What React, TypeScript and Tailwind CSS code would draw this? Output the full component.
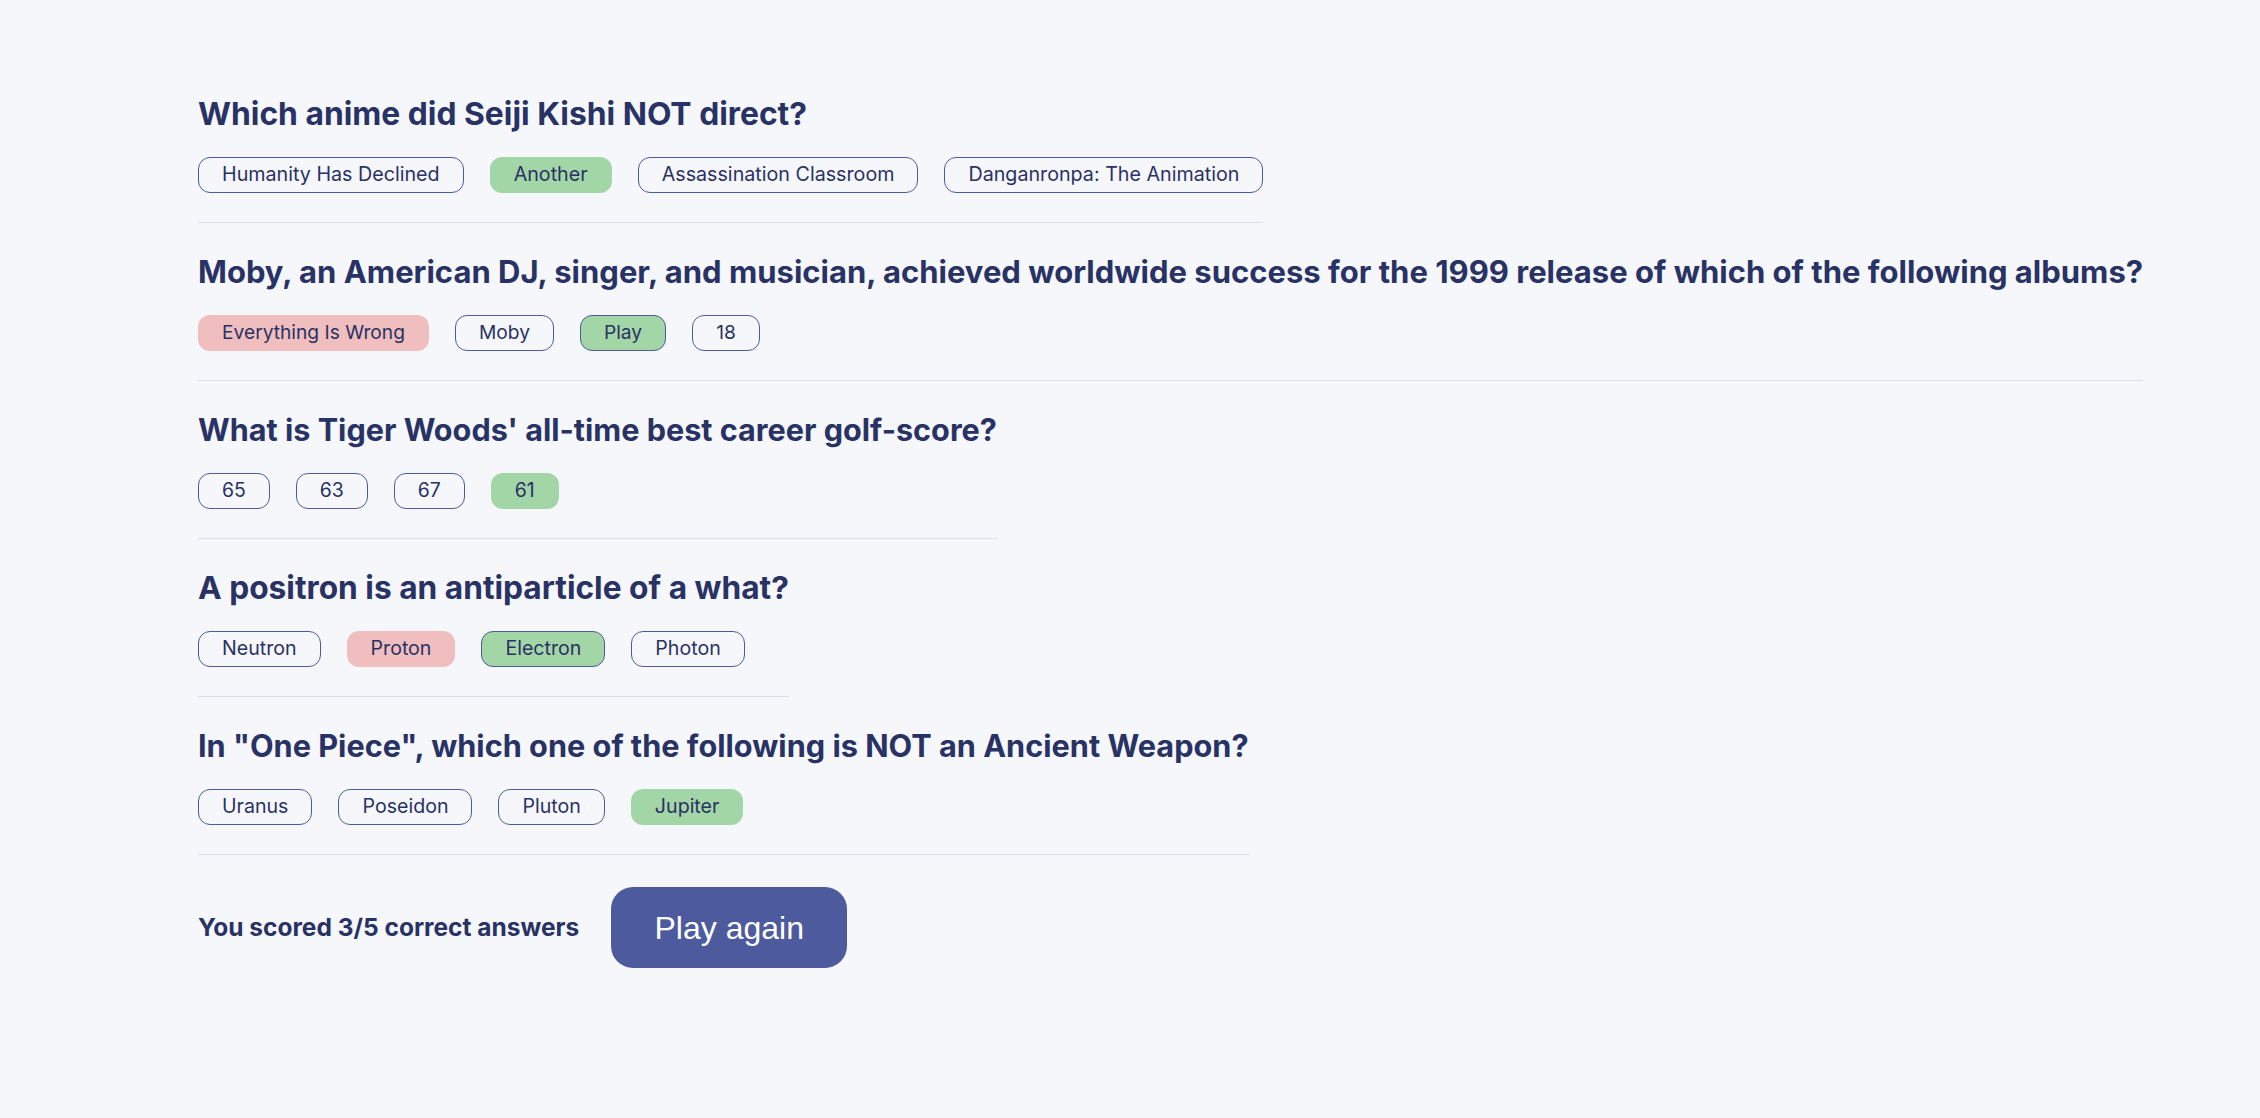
import React from "react";

type Status = "none" | "correct" | "wrong" | "missed";

const questions: { q: string; qSize: string; aSize: string; answers: { t: string; s: Status }[] }[] = [
  {
    q: "Which anime did Seiji Kishi NOT direct?",
    qSize: "text-[31.8px]",
    aSize: "text-[19.7px]",
    answers: [
      { t: "Humanity Has Declined", s: "none" },
      { t: "Another", s: "correct" },
      { t: "Assassination Classroom", s: "none" },
      { t: "Danganronpa: The Animation", s: "none" },
    ],
  },
  {
    q: "Moby, an American DJ, singer, and musician, achieved worldwide success for the 1999 release of which of the following albums?",
    qSize: "text-[31px]",
    aSize: "text-[19.2px]",
    answers: [
      { t: "Everything Is Wrong", s: "wrong" },
      { t: "Moby", s: "none" },
      { t: "Play", s: "missed" },
      { t: "18", s: "none" },
    ],
  },
  {
    q: "What is Tiger Woods' all-time best career golf-score?",
    qSize: "text-[30.6px]",
    aSize: "text-[19.4px]",
    answers: [
      { t: "65", s: "none" },
      { t: "63", s: "none" },
      { t: "67", s: "none" },
      { t: "61", s: "correct" },
    ],
  },
  {
    q: "A positron is an antiparticle of a what?",
    qSize: "text-[31.7px]",
    aSize: "text-[19.6px]",
    answers: [
      { t: "Neutron", s: "none" },
      { t: "Proton", s: "wrong" },
      { t: "Electron", s: "missed" },
      { t: "Photon", s: "none" },
    ],
  },
  {
    q: 'In "One Piece", which one of the following is NOT an Ancient Weapon?',
    qSize: "text-[30.7px]",
    aSize: "text-[19.6px]",
    answers: [
      { t: "Uranus", s: "none" },
      { t: "Poseidon", s: "none" },
      { t: "Pluton", s: "none" },
      { t: "Jupiter", s: "correct" },
    ],
  },
];

const statusClass: Record<Status, string> = {
  none: "border-[#4d5b9e] bg-transparent",
  correct: "border-transparent bg-[#a3d6a7]",
  wrong: "border-transparent bg-[#f0bebe]",
  missed: "border-[#4d5b9e] bg-[#a3d6a7]",
};

export default function App() {
  return (
    <div
      className="min-h-[1118px] w-full bg-[#f5f7fb] pl-[198px] pt-[65px] text-[#293264]"
      style={{ fontFamily: "Inter, 'Noto Sans', sans-serif" }}
    >
      {questions.map((item, i) => (
        <div key={i} className="flex w-fit flex-col border-b border-[#dbdef0] pt-[29px] pb-[29px]">
          <h2 className={`h-[40px] whitespace-nowrap font-bold leading-[40px] ${item.qSize}`}>{item.q}</h2>
          <div className="mt-[23px] flex gap-[26px]">
            {item.answers.map((a, j) => (
              <div
                key={j}
                className={`flex h-[36px] items-center whitespace-nowrap rounded-[12px] border px-[23px] leading-none ${item.aSize} ${statusClass[a.s]}`}
              >
                {a.t}
              </div>
            ))}
          </div>
        </div>
      ))}
      <div className="mt-[32px] flex h-[81px] items-center gap-[32px]">
        <span className="text-[24.5px] font-bold">You scored 3/5 correct answers</span>
        <button
          className="flex h-[81px] w-[236px] items-center justify-center rounded-[22px] bg-[#4d5b9e] text-[32px] text-white"
          style={{ fontFamily: "'Liberation Sans', Arial, sans-serif" }}
        >
          Play again
        </button>
      </div>
    </div>
  );
}
